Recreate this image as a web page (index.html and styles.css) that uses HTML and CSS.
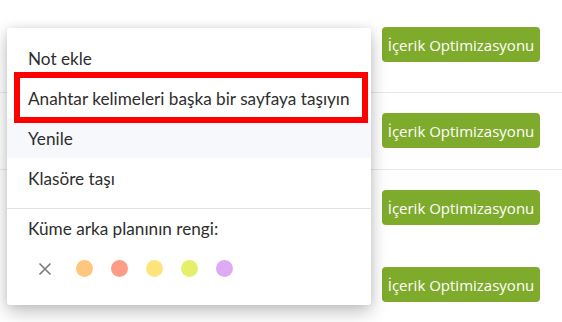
FILE: index.html
```html
<!DOCTYPE html>
<html lang="tr">
<head>
<meta charset="utf-8">
<link rel="stylesheet" href="styles.css">
</head>
<body>
<div class="page">
  <div class="rows">
    <div class="row first line"><div class="cell-text"></div><div class="cell-btn"><span class="btn">İçerik Optimizasyonu</span></div></div>
    <div class="row line"><div class="cell-text"></div><div class="cell-btn"><span class="btn">İçerik Optimizasyonu</span></div></div>
    <div class="row"><div class="cell-text"></div><div class="cell-btn"><span class="btn">İçerik Optimizasyonu</span></div></div>
    <div class="row"><div class="cell-text"><span class="kw">blog</span></div><div class="cell-btn"><span class="btn">İçerik Optimizasyonu</span></div></div>
  </div>

  <div class="menu">
    <div class="items">
      <div class="item">Not ekle</div>
      <div class="item">Anahtar kelimeleri başka bir sayfaya taşıyın</div>
      <div class="item hover">Yenile</div>
      <div class="item">Klasöre taşı</div>
    </div>
    <div class="section">
      <div class="label">Küme arka planının rengi:</div>
      <div class="colors">
        <span class="clear"><svg width="14" height="14" viewBox="0 0 14 14"><path d="M1.5 1.5 L12.5 12.5 M12.5 1.5 L1.5 12.5" stroke="#7a7a7a" stroke-width="1.6" fill="none"/></svg></span>
        <span class="dot c1"></span>
        <span class="dot c2"></span>
        <span class="dot c3"></span>
        <span class="dot c4"></span>
        <span class="dot c5"></span>
      </div>
    </div>
  </div>
  <div class="highlight"></div>
</div>
</body>
</html>
```

FILE: styles.css
```css
html, body {
  margin: 0;
  padding: 0;
  background: #fff;
}
body {
  font-family: "Lato", "Noto Sans", sans-serif;
  color: #2e2e2e;
  width: 562px;
  height: 322px;
  overflow: hidden;
}
.page {
  position: relative;
  width: 562px;
  height: 322px;
  overflow: hidden;
}
.rows {
  margin-top: 7px;
}
.row {
  height: 77px;
  display: flex;
  align-items: flex-start;
  box-sizing: border-box;
  padding-top: 20px;
}
.row.first {
  height: 86px;
}
.row.line {
  border-bottom: 1px solid #e6e9f0;
}
.cell-text {
  width: 382px;
  padding-left: 50px;
  padding-top: 19px;
  box-sizing: border-box;
  font-size: 16px;
  line-height: 20px;
}
.cell-btn {
  display: flex;
}
.btn {
  display: inline-flex;
  align-items: center;
  justify-content: center;
  width: 158px;
  height: 35px;
  background: #7fab2d;
  color: #fff;
  border-radius: 4px;
  font-family: "Open Sans", "Noto Sans", sans-serif;
  font-size: 15px;
}
.menu {
  position: absolute;
  left: 7px;
  top: 28px;
  width: 364px;
  height: 277px;
  background: #fff;
  border-radius: 3px;
  box-shadow: 0 7px 18px rgba(0, 0, 0, 0.24), 0 0 8px rgba(0, 0, 0, 0.08);
  box-sizing: border-box;
}
.items {
  padding: 10px 0;
  border-bottom: 1px solid #e2e2e2;
}
.item {
  height: 40px;
  display: flex;
  align-items: center;
  padding-left: 21px;
  font-size: 17.2px;
}
.item.hover {
  background: #f6f8fb;
}
.section {
  padding: 9px 0 0 21px;
}
.label {
  font-size: 17.2px;
  height: 22px;
  line-height: 22px;
}
.colors {
  display: flex;
  align-items: center;
  gap: 18px;
  margin-top: 20px;
  padding-left: 10px;
}
.clear {
  width: 14px;
  height: 14px;
  display: flex;
  margin-right: 6px;
}
.dot {
  width: 17px;
  height: 17px;
  border-radius: 50%;
}
.c1 { background: #ffc67d; }
.c2 { background: #ff9c88; }
.c3 { background: #ffe47e; }
.c4 { background: #e4f06a; }
.c5 { background: #dfaaf4; }
.highlight {
  position: absolute;
  left: 14px;
  top: 72px;
  width: 354px;
  height: 51px;
  border: 6px solid #ff0000;
  box-sizing: border-box;
}
```
